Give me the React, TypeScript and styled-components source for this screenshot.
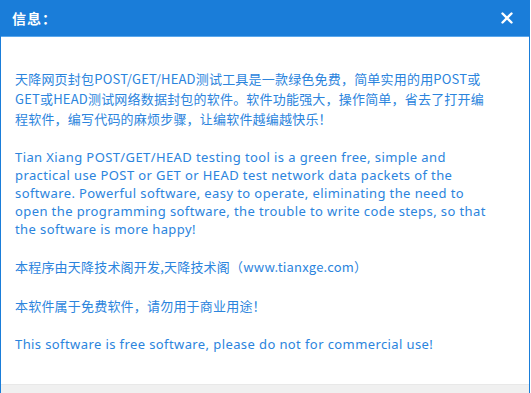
import React from 'react';
import styled, { createGlobalStyle } from 'styled-components';

const GlobalStyle = createGlobalStyle`
  html, body {
    margin: 0;
    padding: 0;
    background: #ffffff;
  }
  body {
    font-family: "Noto Sans", "Noto Sans CJK SC", sans-serif;
  }
`;

const Window = styled.div`
  width: 530px;
  height: 430px;
  display: flex;
  flex-direction: column;
  box-sizing: border-box;
  border-left: 1px solid #1a7dd9;
  border-right: 1px solid #1a7dd9;
  background: #ffffff;
`;

const TitleBar = styled.div`
  height: 36px;
  flex: none;
  display: flex;
  align-items: center;
  justify-content: space-between;
  padding: 0 14px 0 11px;
  background: #1a7dd9;
  border-bottom: 1px solid #5aa7ec;
`;

const Title = styled.div`
  color: #ffffff;
  font-family: "Noto Sans CJK SC", sans-serif;
  font-size: 14px;
  font-weight: 700;
  letter-spacing: 1px;
`;

const CloseButton = styled.button`
  width: 16px;
  height: 16px;
  padding: 0;
  border: none;
  background: transparent;
  display: flex;
  align-items: center;
  justify-content: center;
  cursor: pointer;
`;

const Content = styled.div`
  flex: none;
  height: 347px;
  box-sizing: border-box;
  padding: 32px 15px 0 14px;
  display: flex;
  flex-direction: column;
  gap: 19px;
`;

const Paragraph = styled.p<{ $cjk?: boolean }>`
  margin: 0;
  color: #2b84dd;
  font-size: 13px;
  white-space: nowrap;
  font-family: ${p => (p.$cjk ? '"Noto Sans CJK SC", sans-serif' : '"Noto Sans", "Noto Sans CJK SC", sans-serif')};
  line-height: ${p => (p.$cjk ? '20px' : '18px')};
  letter-spacing: ${p => (p.$cjk ? '0.2px' : '0.4px')};
`;

const Footer = styled.div`
  flex: 1;
  background: #f0f0f0;
  border-top: 1px solid #e8e8e8;
`;

const paragraphs: { cjk?: boolean; lines: string[] }[] = [
  {
    cjk: true,
    lines: [
      '天降网页封包POST/GET/HEAD测试工具是一款绿色免费，简单实用的用POST或',
      'GET或HEAD测试网络数据封包的软件。软件功能强大，操作简单，省去了打开编',
      '程软件，编写代码的麻烦步骤，让编软件越编越快乐！',
    ],
  },
  {
    lines: [
      'Tian Xiang POST/GET/HEAD testing tool is a green free, simple and',
      'practical use POST or GET or HEAD test network data packets of the',
      'software. Powerful software, easy to operate, eliminating the need to',
      'open the programming software, the trouble to write code steps, so that',
      'the software is more happy!',
    ],
  },
  { cjk: true, lines: ['本程序由天降技术阁开发,天降技术阁（www.tianxge.com）'] },
  { cjk: true, lines: ['本软件属于免费软件，请勿用于商业用途！'] },
  { lines: ['This software is free software, please do not for commercial use!'] },
];

export default function App() {
  return (
    <>
      <GlobalStyle />
      <Window>
        <TitleBar>
          <Title>信息：</Title>
          <CloseButton aria-label="关闭">
            <svg width="12" height="12" viewBox="0 0 12 12">
              <path d="M1.5 1.5 L10.5 10.5 M10.5 1.5 L1.5 10.5" stroke="#ffffff" strokeWidth="2.4" strokeLinecap="round" />
            </svg>
          </CloseButton>
        </TitleBar>
        <Content>
          {paragraphs.map((para, i) => (
            <Paragraph key={i} $cjk={para.cjk}>
              {para.lines.map((line, j) => (
                <React.Fragment key={j}>
                  {j > 0 && <br />}
                  {line}
                </React.Fragment>
              ))}
            </Paragraph>
          ))}
        </Content>
        <Footer />
      </Window>
    </>
  );
}
